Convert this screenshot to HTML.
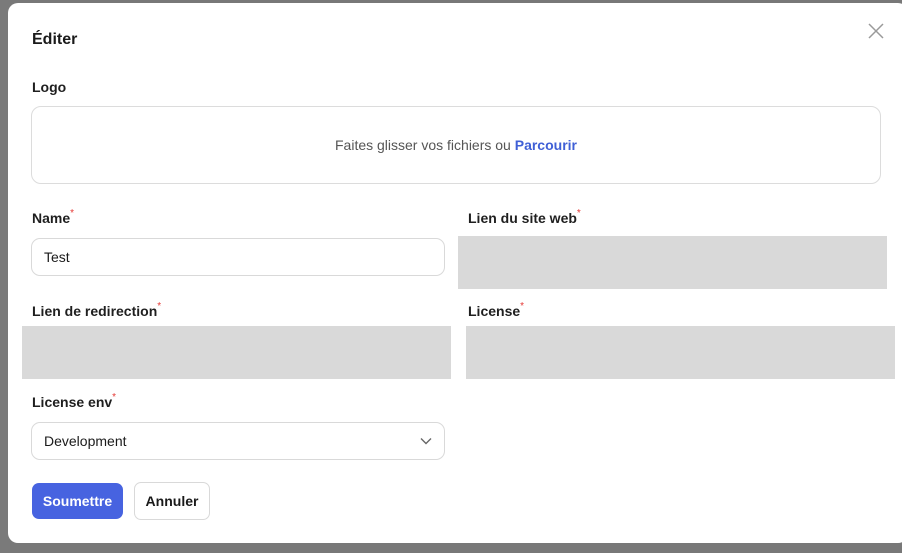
<!DOCTYPE html>
<html><head><meta charset="utf-8"><style>
*{box-sizing:border-box;margin:0;padding:0}
body{width:902px;height:553px;background:#787878;font-family:"Liberation Sans",sans-serif;position:relative;overflow:hidden;color:#1a1a1a}
.bg{position:absolute;left:0;top:0;width:10px;height:553px;background:#7a7a7a}
.modal{position:absolute;left:8px;top:3px;width:900px;height:540px;background:#fff;border-radius:10px}
.abs{position:absolute}
.lbl{position:absolute;font-size:14px;font-weight:bold;color:#1f1f1f}
.lbl sup{color:#e53935;font-size:10px;font-weight:normal;position:relative;top:-2px;vertical-align:top}
.inp{position:absolute;border:1px solid #d9d9d9;border-radius:9px;background:#fff;font-size:14px;padding-left:12px;display:flex;align-items:center}
.gray{position:absolute;background:#d9d9d9}
</style></head><body>
<div class="bg"></div>
<div class="modal"></div>
<div class="abs" style="left:32px;top:31px;font-size:16px;font-weight:bold;color:#1a1a1a">Éditer</div>
<svg class="abs" style="left:868px;top:23px" width="16" height="16" viewBox="0 0 16 16"><path d="M1 1L15 15M15 1L1 15" stroke="#9a9a9a" stroke-width="1.5"/></svg>
<div class="lbl" style="left:32px;top:79px">Logo</div>
<div class="abs" style="left:31px;top:106px;width:850px;height:78px;border:1px solid #dcdcdc;border-radius:10px;display:flex;align-items:center;justify-content:center;font-size:14px;color:#555">Faites glisser vos fichiers ou&nbsp;<b style="color:#3f5fd6">Parcourir</b></div>
<div class="lbl" style="left:32px;top:210px">Name<sup>*</sup></div>
<div class="inp" style="left:31px;top:238px;width:414px;height:38px">Test</div>
<div class="lbl" style="left:468px;top:210px">Lien du site web<sup>*</sup></div>
<div class="gray" style="left:458px;top:236px;width:429px;height:53px"></div>
<div class="lbl" style="left:32px;top:303px">Lien de redirection<sup>*</sup></div>
<div class="gray" style="left:22px;top:326px;width:429px;height:53px"></div>
<div class="lbl" style="left:468px;top:303px">License<sup>*</sup></div>
<div class="gray" style="left:466px;top:326px;width:429px;height:53px"></div>
<div class="lbl" style="left:32px;top:394px">License env<sup>*</sup></div>
<div class="inp" style="left:31px;top:422px;width:414px;height:38px">Development
<svg class="abs" style="right:12px;top:14px" width="12" height="8" viewBox="0 0 12 8"><path d="M1 1.5L6 6.5L11 1.5" stroke="#666" stroke-width="1.4" fill="none"/></svg></div>
<div class="abs" style="left:32px;top:483px;width:91px;height:36px;background:#4763e0;border-radius:7px;color:#fff;font-size:14px;font-weight:bold;display:flex;align-items:center;justify-content:center">Soumettre</div>
<div class="abs" style="left:134px;top:482px;width:76px;height:38px;border:1px solid #d9d9d9;border-radius:7px;font-size:14px;font-weight:bold;display:flex;align-items:center;justify-content:center">Annuler</div>
</body></html>
